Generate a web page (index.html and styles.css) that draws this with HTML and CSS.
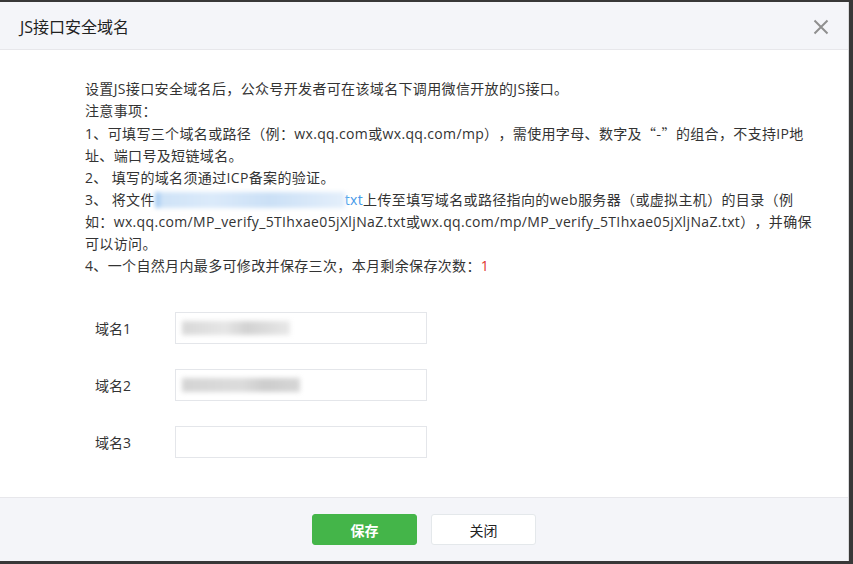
FILE: index.html
```html
<!DOCTYPE html>
<html lang="zh-CN">
<head>
<meta charset="utf-8">
<title>JS接口安全域名</title>
<link rel="stylesheet" href="styles.css">
</head>
<body>
<div class="dialog">
  <div class="dialog-hd">
    <h3 class="dialog-title">JS接口安全域名</h3>
    <span class="dialog-close" aria-label="关闭">
      <svg width="16" height="16" viewBox="0 0 16 16"><path d="M1.5 1.5 L14.5 14.5 M14.5 1.5 L1.5 14.5" stroke="#8f8f8f" stroke-width="2" fill="none"/></svg>
    </span>
  </div>
  <div class="dialog-bd">
    <div class="tips">
      <p>设置JS接口安全域名后，公众号开发者可在该域名下调用微信开放的JS接口。</p>
      <p>注意事项：</p>
      <p>1、可填写三个域名或路径（例：wx.qq.com或wx.qq.com/mp），需使用字母、数字及<span class="cjk">“-”</span>的组合，不支持IP地<br>址、端口号及短链域名。</p>
      <p>2、 填写的域名须通过ICP备案的验证。</p>
      <p>3、 将文件<span class="file-link"><span class="blur-link" aria-hidden="true"></span>txt</span>上传至填写域名或路径指向的web服务器（或虚拟主机）的目录（例<br>如：wx.qq.com/MP_verify_5TIhxae05jXljNaZ.txt或wx.qq.com/mp/MP_verify_5TIhxae05jXljNaZ.txt），并确保<br>可以访问。</p>
      <p>4、一个自然月内最多可修改并保存三次，本月剩余保存次数：<span class="count">1</span></p>
    </div>
    <div class="form">
      <div class="form-row">
        <label class="form-label">域名1</label>
        <div class="form-input"><span class="blur blur-a"></span></div>
      </div>
      <div class="form-row">
        <label class="form-label">域名2</label>
        <div class="form-input"><span class="blur blur-b"></span></div>
      </div>
      <div class="form-row">
        <label class="form-label">域名3</label>
        <div class="form-input"></div>
      </div>
    </div>
  </div>
  <div class="dialog-ft">
    <button class="btn btn-primary">保存</button>
    <button class="btn btn-default">关闭</button>
  </div>
</div>
</body>
</html>
```
FILE: styles.css
```css
* { box-sizing: border-box; }
html, body { margin: 0; padding: 0; }
body {
  background: #383838;
  font-family: "Open Sans", "Noto Sans CJK SC", sans-serif;
  color: #333;
  height: 564px;
  overflow: hidden;
  text-spacing-trim: space-all;
}
.cjk { font-family: "Noto Sans CJK SC", sans-serif; }
.dialog {
  width: 849px;
  height: 559px;
  margin-top: 2px;
  background: #fff;
  display: flex;
  flex-direction: column;
  border-right: 1px solid #d9dadc;
}
.dialog-hd {
  height: 48px;
  background: #f4f5f9;
  border-bottom: 1px solid #e7e7eb;
  display: flex;
  align-items: center;
  justify-content: space-between;
  padding: 0 19px 0 20px;
}
.dialog-title {
  margin: 0;
  font-size: 16px;
  font-weight: normal;
  color: #222;
}
.dialog-close {
  display: flex;
  width: 16px;
  height: 16px;
  margin-top: 2px;
}
.dialog-bd {
  flex: 1;
  padding: 28px 20px 0 85px;
}
.tips p {
  margin: 0;
  font-size: 14px;
  line-height: 22px;
  letter-spacing: 0.35px;
  color: #333;
}
.file-link { color: #459ae9; }
.blur-link {
  display: inline-block;
  width: 190px;
  height: 16px;
  background: linear-gradient(90deg, #a9cdf2 0 4px, #cfe3f7 6px, #dbeafa 30%, #cbe0f6 60%, #e4effb);
  filter: blur(2px);
  vertical-align: -3px;
}
.count { color: #e0322f; }
.form {
  margin-top: 35px;
  display: flex;
  flex-direction: column;
  gap: 25px;
}
.form-row {
  display: flex;
  align-items: center;
}
.form-label {
  width: 90px;
  padding-left: 10px;
  font-size: 14px;
  color: #333;
}
.form-input {
  width: 252px;
  height: 32px;
  border: 1px solid #e4e6ea;
  background: #fff;
  display: flex;
  align-items: center;
  padding-left: 6px;
}
.blur {
  display: block;
  height: 14px;
  filter: blur(2.5px);
}
.blur-a {
  width: 108px;
  background: linear-gradient(90deg, #d8d8d8, #e6e6e6 40%, #d2d2d2 60%, #e8e8e8);
}
.blur-b {
  width: 118px;
  background: linear-gradient(90deg, #d4d4d4, #dcdcdc 50%, #cdcdcd 70%, #d6d6d6);
}
.dialog-ft {
  height: 64px;
  background: #f4f5f9;
  border-top: 1px solid #e7e7eb;
  display: flex;
  justify-content: center;
  align-items: center;
  gap: 14px;
}
.btn {
  width: 105px;
  height: 31px;
  font-family: "Noto Sans CJK SC", sans-serif;
  font-size: 14px;
  border-radius: 3px;
  cursor: pointer;
  padding: 0;
}
.btn-primary {
  background: #44b549;
  border: 1px solid #44b549;
  color: #fff;
  font-weight: bold;
}
.btn-default {
  background: #fff;
  border: 1px solid #e4e8eb;
  color: #222;
}
```
